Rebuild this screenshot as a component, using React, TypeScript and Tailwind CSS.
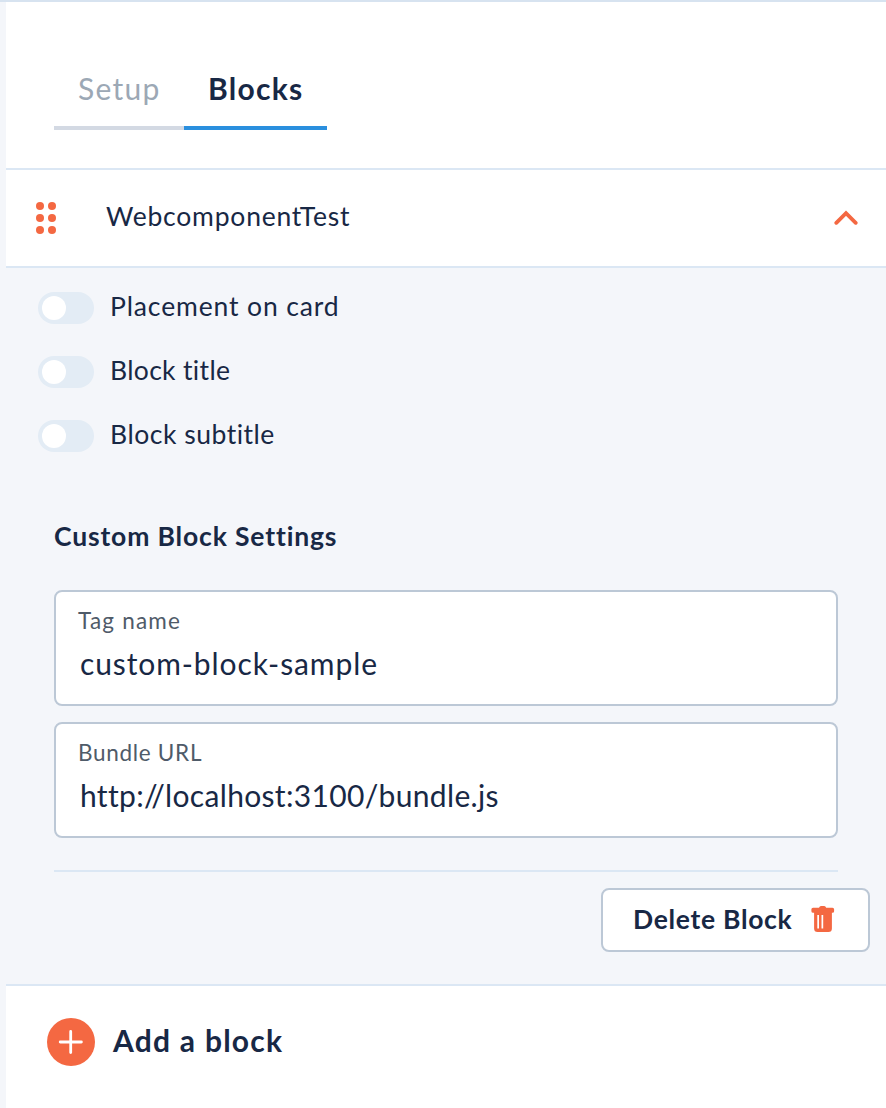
import { useState } from 'react';

function Toggle({ label, className }: { label: string; className: string }) {
  const [on, setOn] = useState(false);
  return (
    <div className="flex h-8 items-center">
      <button
        role="switch"
        aria-checked={on}
        aria-label={label}
        onClick={() => setOn(!on)}
        className={`flex h-8 w-14 items-center rounded-full px-1 ${on ? 'justify-end bg-[#2a8fde]' : 'bg-[#e3ecf5]'}`}
      >
        <span className="size-6 rounded-full bg-white" />
      </button>
      <span className={`-mt-[5px] ml-4 text-[26.5px] leading-8 ${className}`}>{label}</span>
    </div>
  );
}

function Field({ label, value, labelClass, valueClass }: { label: string; value: string; labelClass: string; valueClass: string }) {
  return (
    <div className="h-[116px] rounded-lg border-2 border-[#bcc8d6] bg-white px-[22px] pt-[15px]">
      <div className={`leading-7 text-[#4f5b69] ${labelClass}`}>{label}</div>
      <div className={`mt-2 pl-0.5 text-[30px] leading-10 ${valueClass}`}>{value}</div>
    </div>
  );
}

export default function App() {
  return (
    <div className="h-[1108px] w-[886px] overflow-hidden border-t-2 border-[#d7e3f0] bg-[#f4f6fa] pl-1.5 font-['Lato',sans-serif] text-[#182845]">
      <header className="h-42 border-b-2 border-[#dbe7f4] bg-white pt-[62px] pl-12">
        <nav className="flex h-[66px] text-[30px] leading-[48px]">
          <div className="w-[130px] border-b-4 border-[#d3d9e3] pl-6 text-[#9ca8b5]">
            <span className="tracking-[1.3px]">Setup</span>
          </div>
          <div className="w-[143px] border-b-4 border-[#2a8fde] pl-6 font-bold">
            <span className="tracking-[1.25px]">Blocks</span>
          </div>
        </nav>
      </header>

      <section className="flex h-[98px] items-center border-b-2 border-[#dbe7f4] bg-white pr-7 pl-[30px]">
        <svg width="20" height="32" viewBox="0 0 20 32" fill="#f46842">
          <circle cx="4" cy="4" r="4" />
          <circle cx="16" cy="4" r="4" />
          <circle cx="4" cy="16" r="4" />
          <circle cx="16" cy="16" r="4" />
          <circle cx="4" cy="28" r="4" />
          <circle cx="16" cy="28" r="4" />
        </svg>
        <span className="-mt-1 ml-[50px] text-[26.5px] leading-8 tracking-[0.78px]">WebcomponentTest</span>
        <svg className="ml-auto" width="24" height="16" viewBox="0 0 24 16" fill="none" stroke="#f46842" strokeWidth="3.8" strokeLinecap="round">
          <path d="M2.3 12.800 12 3.100 21.700 12.800" />
        </svg>
      </section>

      <section className="h-[718px] border-b-2 border-[#dbe7f4] pt-6 pl-8">
        <div className="flex flex-col gap-8">
          <Toggle label="Placement on card" className="tracking-[0.87px]" />
          <Toggle label="Block title" className="tracking-[0.33px]" />
          <Toggle label="Block subtitle" className="tracking-[0.52px]" />
        </div>
        <div className="mt-[68px] ml-4 w-[784px]">
          <h2 className="text-[26.5px] leading-8 font-bold">
            <span className="tracking-[0.85px]">Custom Block Settings</span>
          </h2>
          <div className="mt-[38px] flex flex-col gap-4">
            <Field label="Tag name" value="custom-block-sample" labelClass="text-[22.5px] tracking-[1.2px]" valueClass="tracking-[0.9px]" />
            <Field label="Bundle URL" value="http://localhost:3100/bundle.js" labelClass="text-[22.5px] tracking-[0.7px]" valueClass="tracking-[0.33px]" />
          </div>
          <div className="mt-8 h-0.5 bg-[#dbe7f4]" />
        </div>
        <div className="mt-4 flex justify-end pr-4">
          <button className="flex h-16 w-[269px] items-center rounded-lg border-2 border-[#bcc8d6] bg-white pl-[30px] text-[26.5px] leading-8 font-bold">
            <span className="-mt-[3px] w-[178px] text-left tracking-[0.7px]">Delete Block</span>
            <svg className="-mt-0.5" width="24" height="26" viewBox="0 0 24 26" fill="#f46842">
              <path
                fillRule="evenodd"
                d="M8 1.700Q8.600 0 10 0h3.200q1.400 0 2 1.700h6.300q1.600 0 1.600 1.600v1.900q0 1.600-1.600 1.600h-.6v15.700q0 3.500-3.500 3.500h-10.800q-3.500 0-3.500-3.500V6.800h-1Q.4 6.800.4 5.200V3.300Q.4 1.700 2 1.700zM6.300 9v13.500h1.700V9zM10.500 9v13.500h1.700V9z"
              />
            </svg>
          </button>
        </div>
      </section>

      <section className="flex h-[122px] items-start bg-white pt-8 pl-[41px]">
        <svg width="48" height="48" viewBox="0 0 48 48">
          <circle cx="24" cy="24" r="24" fill="#f46842" />
          <path d="M13.200 24h21.200M23.700 13.400v21.200" stroke="#fff" strokeWidth="2.800" strokeLinecap="round" />
        </svg>
        <span className="mt-0.5 ml-[18px] text-[30px] leading-10 font-bold tracking-[1.25px]">Add a block</span>
      </section>
    </div>
  );
}
